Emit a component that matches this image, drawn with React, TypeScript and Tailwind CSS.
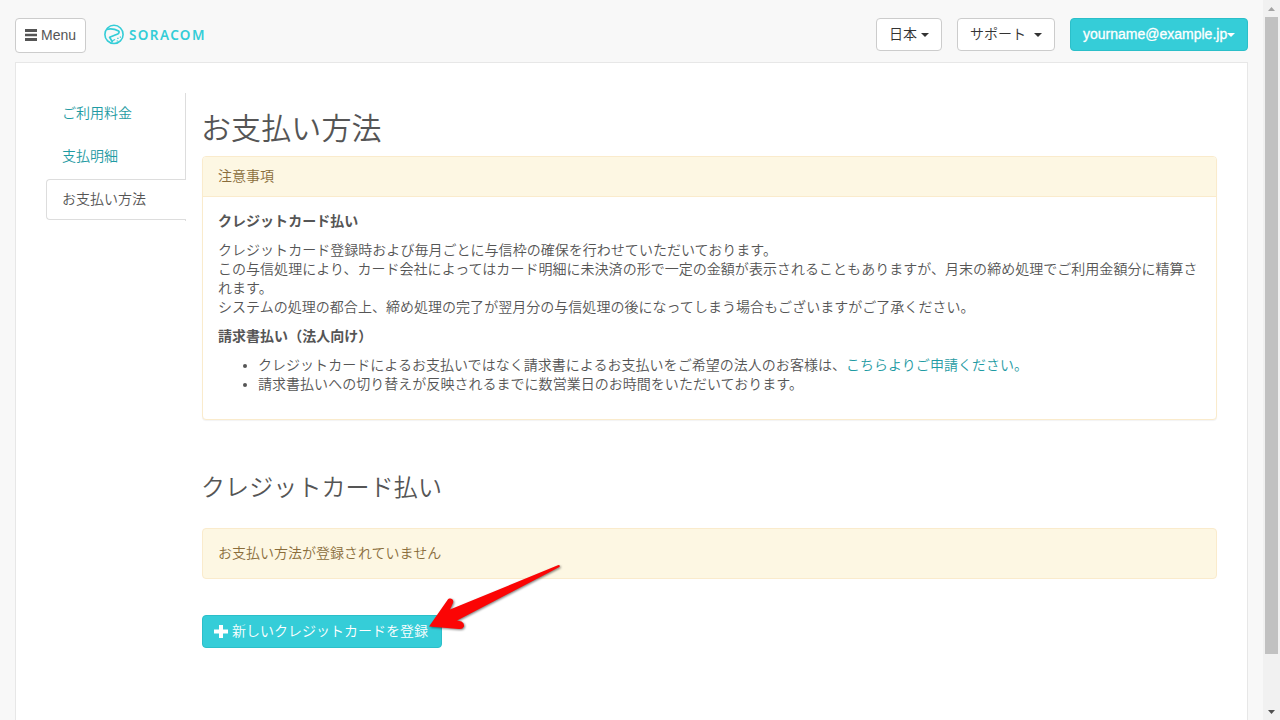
import type { ReactNode } from "react";

function Caret({ className = "" }: { className?: string }) {
  return (
    <span
      className={`inline-block h-0 w-0 border-x-4 border-t-4 border-x-transparent border-t-current ${className}`}
    />
  );
}

function Logo() {
  return (
    <div className="ml-[18px] flex items-center text-[#34cdd7]">
      <svg width="21" height="21" viewBox="0 0 21 21" fill="none" stroke="currentColor">
        <circle cx="10" cy="10.400" r="9.100" strokeWidth="1.600" />
        <path d="M2.800 5.300C6.500 4.400 11.500 5.300 14.600 7C15.600 7.700 15 9.300 13.700 10L5.600 13.200L8.600 18.200" strokeWidth="1.700" strokeLinejoin="round" />
        <path d="M8.300 16.700L11.200 15.500M13.200 14.300h1.400M12.600 17h1.500M15.800 13.200h1.200" strokeWidth="1.200" />
      </svg>
      <span className="ml-1 whitespace-nowrap font-['Noto_Sans','Open_Sans',sans-serif] text-[13.5px] font-semibold leading-5 tracking-[1.4px]">
        SORACOM
      </span>
    </div>
  );
}

function Tab({ children, active = false }: { children: ReactNode; active?: boolean }) {
  return (
    <a
      className={
        active
          ? "-mr-px block h-[41px] rounded-l border border-r-0 border-[#ddd] bg-white px-[15px] leading-[39px] text-[#555]"
          : "block h-[41px] px-4 leading-[40px] text-[#1f9ba3]"
      }
    >
      {children}
    </a>
  );
}

function Scrollbar() {
  return (
    <div className="flex h-full w-[17px] flex-col items-center bg-[#f1f1f1]">
      <div className="flex h-[17px] items-center justify-center">
        <svg width="7" height="4" viewBox="0 0 7 4" fill="#a3a3a3"><path d="M0 4L3.500 0L7 4Z" /></svg>
      </div>
      <div className="h-[637px] w-[13px] bg-[#c1c1c1]" />
      <div className="mt-auto flex h-[17px] items-center justify-center">
        <svg width="7" height="4" viewBox="0 0 7 4" fill="#505050"><path d="M0 0L3.500 4L7 0Z" /></svg>
      </div>
    </div>
  );
}

export default function App() {
  return (
    <div className="flex h-[720px] w-[1280px] overflow-hidden bg-[#f8f8f8] font-['Liberation_Sans','Noto_Sans_CJK_JP',sans-serif] text-[14px] font-[350] leading-[19px] text-[#555]">
      <div className="flex min-w-0 flex-1 flex-col pl-[15px] pr-[15px]">
        <header className="flex h-[62px] shrink-0 items-start pt-[18px]">
          <button className="flex h-[35px] w-[71px] items-center rounded border border-[#ccc] bg-white pl-[9px] text-[#555]">
            <svg width="12" height="12" viewBox="0 0 12 12" fill="currentColor" className="mr-1 -mt-0.5">
              <path d="M0 0h12v3H0zM0 4.700h12v2.600H0zM0 9h12v3H0z" />
            </svg>
            Menu
          </button>
          <div className="flex h-[33px] items-center"><Logo /></div>
          <div className="ml-auto flex gap-[15px]">
            <button className="flex h-[33px] w-[66px] items-center rounded border border-[#ccc] bg-white pl-3 text-[#333]">
              日本<Caret className="ml-1" />
            </button>
            <button className="flex h-[33px] w-[98px] items-center rounded border border-[#ccc] bg-white pl-3 text-[#333]">
              サポート<Caret className="ml-2" />
            </button>
            <button className="flex h-[33px] w-[178px] items-center rounded border border-[#2bbfc9] bg-[#35cdd8] pl-3 text-white">
              <span className="[-webkit-text-stroke:0.300px_white]">yourname@example.jp</span>
              <Caret />
            </button>
          </div>
        </header>

        <div className="flex flex-1 border border-b-0 border-[#e7e7e7] bg-white p-[30px]">
          <nav className="flex h-[128px] w-[140px] shrink-0 flex-col gap-0.5 border-r border-[#ddd]">
            <Tab>ご利用料金</Tab>
            <Tab>支払明細</Tab>
            <Tab active>お支払い方法</Tab>
          </nav>

          <main className="ml-4 min-w-0 flex-1">
            <h1 className="mt-[19px] -ml-px h-[44px] text-[30px] leading-[33px] tracking-[0.1px]">お支払い方法</h1>

            <section className="h-[264px] rounded border border-[#faebcc] bg-white shadow-[0_1px_1px_rgba(0,0,0,0.05)]">
              <h2 className="h-10 rounded-t-[3px] border-b border-[#faebcc] bg-[#fdf7e3] px-[15px] leading-[38px] text-[#8a6d3b]">
                注意事項
              </h2>
              <div className="p-[15px] tracking-[0.03px]">
                <p className="mb-[10px] font-bold">クレジットカード払い</p>
                <p className="mb-[10px]">
                  クレジットカード登録時および毎月ごとに与信枠の確保を行わせていただいております。
                  <br />
                  この与信処理により、カード会社によってはカード明細に未決済の形で一定の金額が表示されることもありますが、月末の締め処理でご利用金額分に精算されます。
                  <br />
                  システムの処理の都合上、締め処理の完了が翌月分の与信処理の後になってしまう場合もございますがご了承ください。
                </p>
                <p className="mb-[10px] font-bold">請求書払い（法人向け）</p>
                <ul className="list-disc pl-10">
                  <li>
                    クレジットカードによるお支払いではなく請求書によるお支払いをご希望の法人のお客様は、<a className="text-[#1f9ba3]">こちらよりご申請ください。</a>
                  </li>
                  <li>請求書払いへの切り替えが反映されるまでに数営業日のお時間をいただいております。</li>
                </ul>
              </div>
            </section>

            <h2 className="mt-[55px] -ml-px h-[53px] text-[24px] leading-[26px] tracking-[0.1px]">クレジットカード払い</h2>

            <div className="h-[51px] rounded border border-[#faebcc] bg-[#fdf7e3] px-[15px] leading-[49px] text-[#8a6d3b]">
              お支払い方法が登録されていません
            </div>

            <div className="relative mt-9 w-[240px]">
              <button className="flex h-[33px] w-[240px] items-center rounded border border-[#2bbfc9] bg-[#35cdd8] pl-[11px] pb-px text-white">
                <svg width="14" height="13" viewBox="0 0 14 13" fill="currentColor" className="mr-1">
                  <path d="M5 0h4v4.500h5v4H9V13H5V8.500H0v-4h5z" />
                </svg>
                新しいクレジットカードを登録
              </button>
              <svg className="absolute -top-[55px] left-[220px] drop-shadow-[1px_1px_1px_rgba(0,0,0,0.500)]" width="145" height="75" viewBox="0 0 145 75" fill="#fb0505">
                <path d="M7 66.500L25.500 40C27.500 37 32.500 39 31 43L28 49.500L136.500 5Q138.500 5 137.500 7L35 60.500L39.500 61.500Q42.500 63 42 66.500Q40.500 69.500 37 69Z" />
              </svg>
            </div>
          </main>
        </div>
      </div>
      <Scrollbar />
    </div>
  );
}
